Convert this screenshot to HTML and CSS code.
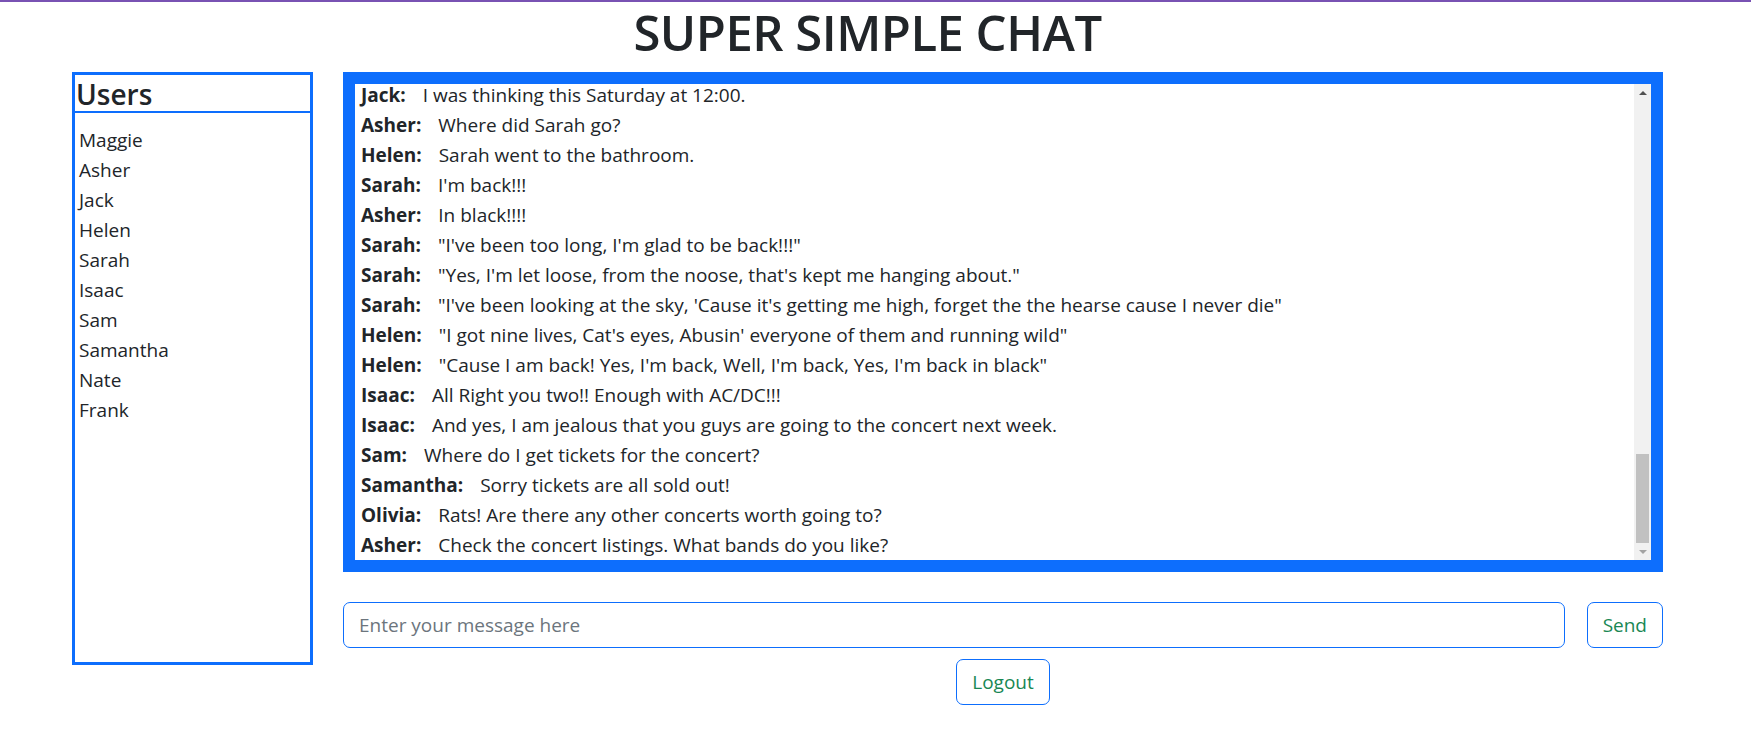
FILE: index.html
```html
<!DOCTYPE html>
<html lang="en">
<head>
<meta charset="utf-8">
<title>Super Simple Chat</title>
<link rel="stylesheet" href="styles.css">
</head>
<body>
<div class="topbar"></div>
<div class="page">
  <h1 class="title">SUPER SIMPLE CHAT</h1>
  <div class="main">
    <aside class="users">
      <h4 class="users-title">Users</h4>
      <ul class="user-list">
        <li>Maggie</li>
        <li>Asher</li>
        <li>Jack</li>
        <li>Helen</li>
        <li>Sarah</li>
        <li>Isaac</li>
        <li>Sam</li>
        <li>Samantha</li>
        <li>Nate</li>
        <li>Frank</li>
      </ul>
    </aside>
    <section class="chat">
      <div class="chat-box">
        <div class="chat-log">
          <div class="msg"><b>Jack:</b>I was thinking this Saturday at 12:00.</div>
          <div class="msg"><b>Asher:</b>Where did Sarah go?</div>
          <div class="msg"><b>Helen:</b>Sarah went to the bathroom.</div>
          <div class="msg"><b>Sarah:</b>I'm back!!!</div>
          <div class="msg"><b>Asher:</b>In black!!!!</div>
          <div class="msg"><b>Sarah:</b>"I've been too long, I'm glad to be back!!!"</div>
          <div class="msg"><b>Sarah:</b>"Yes, I'm let loose, from the noose, that's kept me hanging about."</div>
          <div class="msg"><b>Sarah:</b>"I've been looking at the sky, 'Cause it's getting me high, forget the the hearse cause I never die"</div>
          <div class="msg"><b>Helen:</b>"I got nine lives, Cat's eyes, Abusin' everyone of them and running wild"</div>
          <div class="msg"><b>Helen:</b>"Cause I am back! Yes, I'm back, Well, I'm back, Yes, I'm back in black"</div>
          <div class="msg"><b>Isaac:</b>All Right you two!! Enough with AC/DC!!!</div>
          <div class="msg"><b>Isaac:</b>And yes, I am jealous that you guys are going to the concert next week.</div>
          <div class="msg"><b>Sam:</b>Where do I get tickets for the concert?</div>
          <div class="msg"><b>Samantha:</b>Sorry tickets are all sold out!</div>
          <div class="msg"><b>Olivia:</b>Rats! Are there any other concerts worth going to?</div>
          <div class="msg"><b>Asher:</b>Check the concert listings. What bands do you like?</div>
        </div>
        <div class="scrollbar" aria-hidden="true">
          <span class="sb-btn sb-up"></span>
          <span class="sb-track"><span class="sb-thumb"></span></span>
          <span class="sb-btn sb-down"></span>
        </div>
      </div>
      <form class="compose">
        <input class="compose-input" type="text" placeholder="Enter your message here">
        <button class="btn" type="button">Send</button>
      </form>
      <div class="logout-row">
        <button class="btn" type="button">Logout</button>
      </div>
    </section>
  </div>
</div>
</body>
</html>
```

FILE: styles.css
```css
* {
  box-sizing: border-box;
}

body {
  margin: 0;
  font-family: "Open Sans", "Noto Sans", sans-serif;
  color: #212529;
  background: #fff;
}

.topbar {
  height: 2px;
  background: #7952b3;
}

.page {
  padding: 0 88px 0 72px;
}

.title {
  margin: 0;
  height: 70px;
  font-size: 49px;
  font-weight: 600;
  letter-spacing: -0.5px;
  line-height: 60px;
  text-align: center;
}

.main {
  display: flex;
  gap: 30px;
  align-items: flex-start;
}

.users {
  flex: 0 0 241px;
  height: 593px;
  border: 3px solid #0d6efd;
}

.users-title {
  margin: 0;
  height: 38px;
  padding: 3px 0 0 1px;
  font-size: 28px;
  font-weight: 600;
  line-height: 33px;
  border-bottom: 2px solid #0d6efd;
}

.user-list {
  list-style: none;
  margin: 0;
  padding: 12px 0 0 4px;
  font-size: 19px;
  line-height: 30px;
}

.chat {
  flex: 1;
  min-width: 0;
}

.chat-box {
  display: flex;
  height: 500px;
  border: 12px solid #0d6efd;
}

.chat-log {
  flex: 1;
  min-width: 0;
  overflow: hidden;
  display: flex;
  flex-direction: column;
  justify-content: flex-end;
}

.msg {
  flex: none;
  padding-left: 6px;
  font-size: 19px;
  line-height: 30px;
  white-space: nowrap;
}

.msg b {
  margin-right: 17px;
  font-weight: 700;
}

.scrollbar {
  flex: 0 0 17px;
  display: flex;
  flex-direction: column;
  background: #f1f1f1;
}

.sb-btn {
  flex: 0 0 17px;
  display: flex;
  align-items: center;
  justify-content: center;
}

.sb-btn::before {
  content: "";
  width: 0;
  height: 0;
  border-left: 4px solid transparent;
  border-right: 4px solid transparent;
}

.sb-up::before {
  border-bottom: 4px solid #505050;
}

.sb-down::before {
  border-top: 4px solid #a3a3a3;
}

.sb-track {
  flex: 1;
  display: flex;
  flex-direction: column;
  justify-content: flex-end;
}

.sb-thumb {
  height: 89px;
  margin: 0 2px;
  background: #c1c1c1;
}

.compose {
  display: flex;
  gap: 22px;
  margin: 30px 0 0;
}

.compose-input {
  flex: 1;
  min-width: 0;
  height: 46px;
  padding: 0 15px;
  font-family: inherit;
  font-size: 19px;
  color: #212529;
  border: 1px solid #0d6efd;
  border-radius: 7px;
  outline: none;
}

.compose-input::placeholder {
  color: #6c757d;
}

.btn {
  height: 46px;
  padding: 0 15px;
  font-family: inherit;
  font-size: 19px;
  color: #198754;
  background: #fff;
  border: 1px solid #0d6efd;
  border-radius: 7px;
}

.logout-row {
  display: flex;
  justify-content: center;
  margin-top: 11px;
}
```
